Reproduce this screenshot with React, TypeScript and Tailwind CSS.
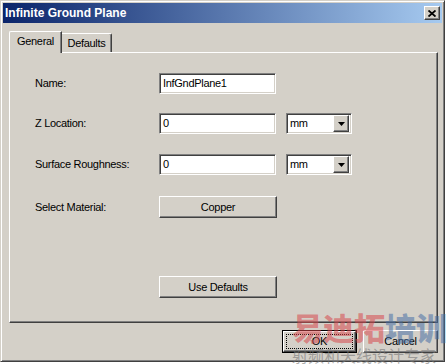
import React from 'react';

const raised =
  'border border-t-white border-l-white border-b-[#404040] border-r-[#404040] shadow-[inset_-1px_-1px_#808080]';
const sunken =
  'border border-t-[#808080] border-l-[#808080] border-b-white border-r-white shadow-[inset_1px_1px_#404040,inset_-1px_-1px_#d4d0c8]';

const Label: React.FC<{ text: string }> = ({ text }) => (
  <div className="w-[124px] shrink-0 text-black">{text}</div>
);

const TextBox: React.FC<{ value: string }> = ({ value }) => (
  <div className={`${sunken} w-[117px] h-[21px] bg-white flex items-center pl-[3px] text-black`}>
    {value}
  </div>
);

const Combo: React.FC<{ value: string }> = () => (
  <div className={`${sunken} w-[66px] h-[21px] bg-white flex items-center ml-[10px] p-[2px]`}>
    <span className="flex-1 pl-[1px] text-black">mm</span>
    <div className={`${raised} w-[16px] h-[17px] bg-[#d4d0c8] flex items-center justify-center`}>
      <svg width="7" height="4" viewBox="0 0 7 4">
        <path d="M0 0h7L3.5 4z" fill="#000" />
      </svg>
    </div>
  </div>
);

const Button: React.FC<{ text: string; w?: string }> = ({ text, w = 'w-[118px]' }) => (
  <div className={`${raised} ${w} h-[22px] bg-[#d4d0c8] flex items-center justify-center text-black`}>
    {text}
  </div>
);

const App: React.FC = () => {
  return (
    <div
      className="relative w-[447px] h-[364px] bg-white overflow-hidden text-[11px] leading-none tracking-[-0.3px]"
      style={{ fontFamily: '"Liberation Sans", Arial, sans-serif' }}
    >
      {/* dialog window */}
      <div className="w-[445px] h-[362px] bg-[#d4d0c8] border border-t-[#d4d0c8] border-l-[#d4d0c8] border-b-[#404040] border-r-[#404040] shadow-[inset_1px_1px_white,inset_-1px_-1px_#808080] p-[2px] flex flex-col">
        {/* title bar */}
        <div className="h-[20px] bg-[linear-gradient(to_right,#0a246a,#a6caf0)] flex items-center pl-[2px] pr-[2px]">
          <span className="flex-1 text-white font-bold text-[12px] tracking-[0px]">Infinite Ground Plane</span>
          <div className={`${raised} w-[16px] h-[14px] bg-[#d4d0c8] flex items-center justify-center`}>
            <svg width="8" height="7" viewBox="0 0 8 7">
              <path d="M0.5 0.5L7.5 6.5M7.5 0.5L0.5 6.5" stroke="#000" strokeWidth="1.8" />
            </svg>
          </div>
        </div>

        {/* body */}
        <div className="flex flex-col pl-[6px] pr-[4px] pt-[8px]">
          {/* tabs */}
          <div className="flex items-end h-[21px]">
            <div className="relative z-10 -mb-px w-[53px] h-[22px] bg-[#d4d0c8] border-l border-t border-l-white border-t-white border-r border-r-[#404040] shadow-[inset_-1px_0_#808080] rounded-tl-[2px] flex items-start justify-center pt-[4px] text-black">
              General
            </div>
            <div className="w-[50px] h-[19px] bg-[#d4d0c8] border-t border-t-white border-r border-r-[#404040] shadow-[inset_-1px_0_#808080] rounded-tr-[2px] flex items-start justify-center pt-[4px] text-black">
              Defaults
            </div>
          </div>

          {/* panel */}
          <div className="h-[271px] border border-t-white border-l-white border-b-[#404040] border-r-[#404040] shadow-[inset_-1px_-1px_#808080] flex flex-col pl-[25px] pt-[20px]">
            <div className="flex items-center h-[21px]">
              <Label text="Name:" />
              <TextBox value="InfGndPlane1" />
            </div>
            <div className="flex items-center h-[21px] mt-[19px]">
              <Label text="Z Location:" />
              <TextBox value="0" />
              <Combo value="mm" />
            </div>
            <div className="flex items-center h-[21px] mt-[20px]">
              <Label text="Surface Roughness:" />
              <TextBox value="0" />
              <Combo value="mm" />
            </div>
            <div className="flex items-center h-[22px] mt-[21px]">
              <Label text="Select Material:" />
              <Button text="Copper" />
            </div>
            <div className="flex items-center h-[22px] mt-[58px]">
              <div className="w-[124px] shrink-0" />
              <Button text="Use Defaults" />
            </div>
          </div>

          {/* buttons */}
          <div className="flex justify-end gap-[6px] mt-[7px]">
            <div className="w-[75px] h-[23px] border border-black">
              <div className={`${raised} w-full h-full bg-[#d4d0c8] p-[2px]`}>
                <div className="w-full h-full border border-dotted border-black flex items-center justify-center text-black">
                  OK
                </div>
              </div>
            </div>
            <Button text="Cancel" w="w-[75px] h-[23px]" />
          </div>
        </div>
      </div>

      {/* watermark overlay */}
      <div
        className="absolute left-[292px] top-[311px] pointer-events-none flex flex-col tracking-[0px]"
        style={{ fontFamily: '"Noto Sans CJK SC", sans-serif' }}
      >
        <div className="flex text-[31px] font-black leading-none">
          <span className="text-[rgba(214,70,74,0.55)]">易迪拓</span>
          <span className="text-[rgba(70,110,165,0.55)]">培训</span>
        </div>
        <div className="text-[16px] leading-none mt-[5px] text-[rgba(120,120,120,0.6)]">
          射频和天线设计专家
        </div>
      </div>
    </div>
  );
};

export default App;
